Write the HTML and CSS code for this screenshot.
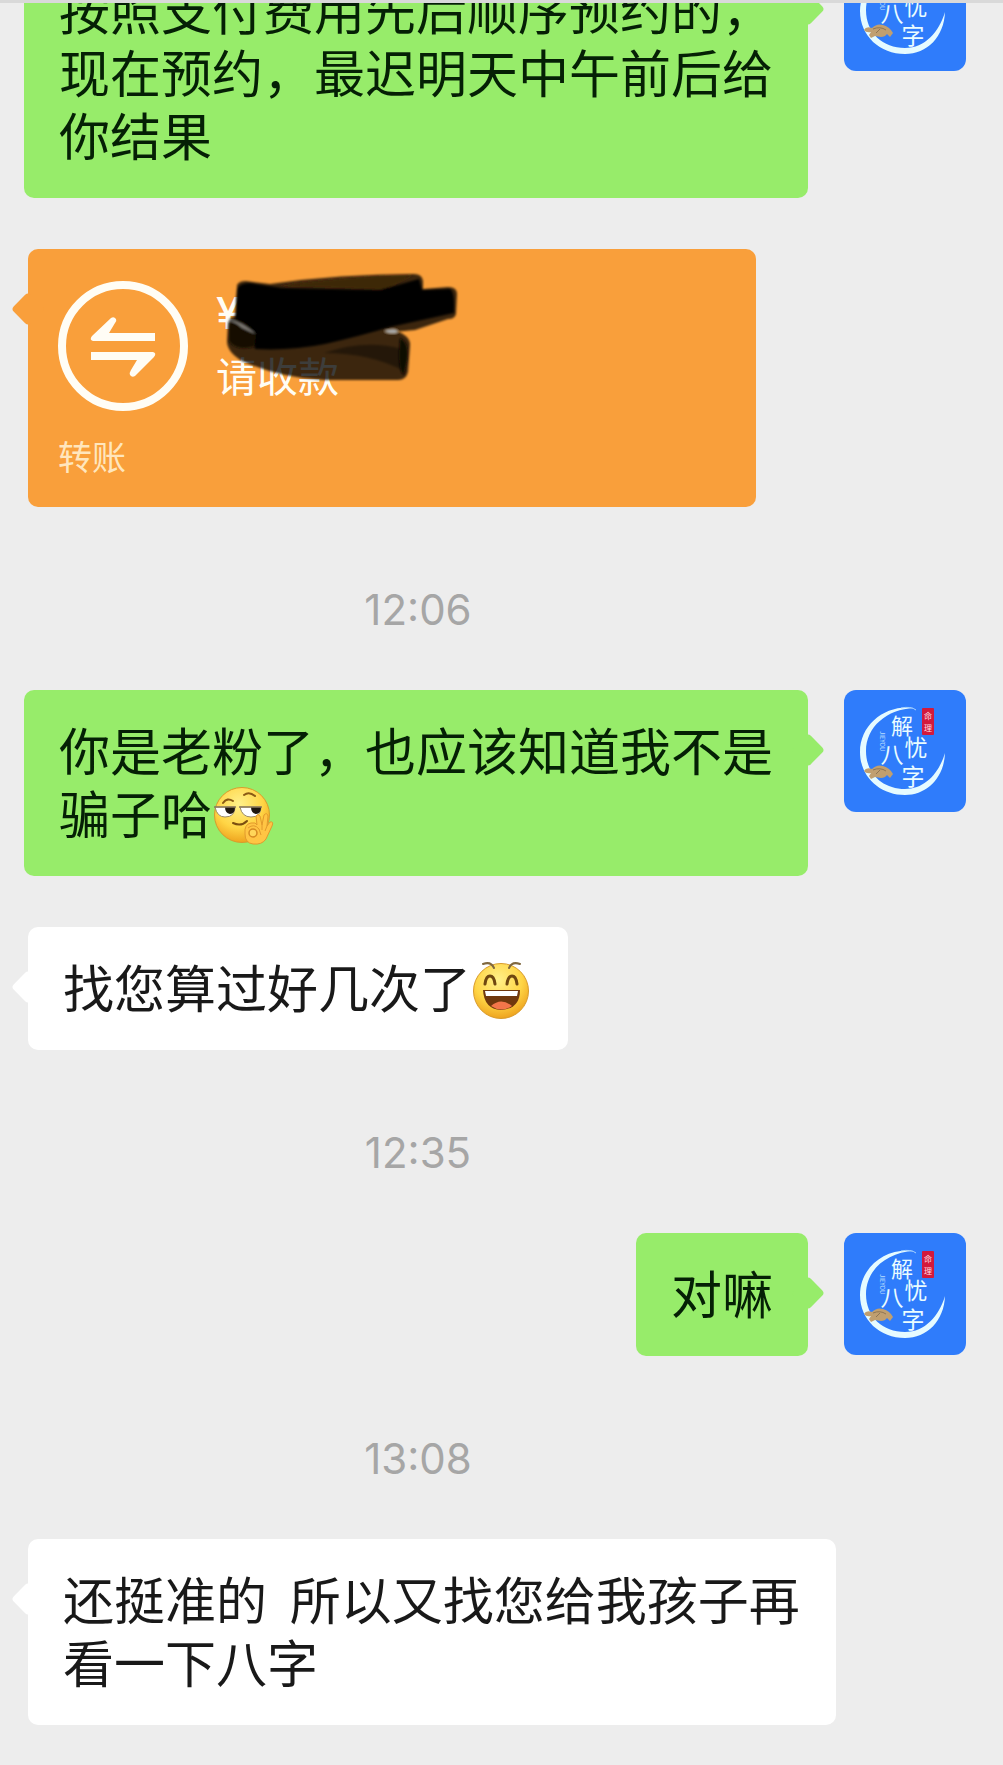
FILE: index.html
```html
<!DOCTYPE html>
<html lang="zh-CN">
<head>
    <meta charset="UTF-8">
    <meta name="viewport" content="width=device-width, initial-scale=1.0">
    <title>聊天</title>
    <link rel="stylesheet" href="styles.css">
</head>
<body>
    <!-- Shared avatar drawing -->
    <svg class="defs" width="0" height="0" aria-hidden="true">
        <symbol id="avatar" viewBox="0 0 122 122">
            <rect width="122" height="122" fill="#2f7cfb"/>
            <path d="M70 18C42 14 16 34 16 62C16 87 36 105 61 105C83 105 100 88 101 63C95 83 81 99 61 99C39 99 22 84 22 61C22 37 43 19 70 18Z" fill="#e6fbff"/>
            <path d="M57 18Q67 16 72 20" fill="none" stroke="#a9d4ff" stroke-width="1"/>
            <g fill="#eafcff" font-family="'Noto Sans CJK SC', sans-serif" text-anchor="middle">
                <text x="58" y="44" font-size="22">解</text>
                <text x="72" y="66" font-size="23">忧</text>
                <text x="48" y="73" font-size="23">八</text>
                <text x="69" y="95" font-size="23">字</text>
                <text transform="translate(36 41) rotate(90)" font-size="6" fill="#b9dcff" text-anchor="start">JIEYOU</text>
            </g>
            <rect x="78" y="18" width="12" height="27" rx="1" fill="#d3193c"/>
            <g fill="#ffdfe2" font-family="'Noto Sans CJK SC', sans-serif" font-size="8" text-anchor="middle">
                <text x="84" y="29">命</text>
                <text x="84" y="41">理</text>
            </g>
            <path d="M20 81Q22 77 28 79Q33 74 39 76Q46 78 49 84L46 88L43 85Q41 88 37 88L31 87L27 89L25 86L27 83Q22 84 20 81Z" fill="#c09f70"/>
            <path d="M29 80Q36 77 42 81M32 84L36 80" fill="none" stroke="#8f7553" stroke-width="1"/>
        </symbol>
    </svg>

    <main class="chat">
        <div class="messages">
            <div class="row sent">
                <div class="bubble">按照支付费用先后顺序预约的，现在预约，最迟明天中午前后给你结果</div>
                <svg class="avatar" role="img" aria-label="解忧八字"><use href="#avatar"/></svg>
            </div>

            <div class="row received">
                <div class="transfer">
                    <div class="transfer-main">
                        <svg class="transfer-icon" viewBox="0 0 130 130" aria-hidden="true">
                            <circle cx="65" cy="65" r="61" fill="none" stroke="#fffdf5" stroke-width="8"/>
                            <path d="M97 52V60H35Q31 59 34 55L53 37Q56 35 58 38Q59 40 57 42L51 52ZM33 71H95Q99 72 96 76L77 95Q74 97 72 94Q71 92 73 89L79 79H33Z" fill="#fffdf5"/>
                        </svg>
                        <div class="transfer-info">
                            <div class="amount">¥</div>
                            <div class="status">请收款</div>
                        </div>
                    </div>
                    <div class="transfer-type">转账</div>
                    <!-- Marker strokes hiding the amount -->
                    <svg class="marker" viewBox="0 0 240 116" aria-hidden="true">
                        <defs>
                            <filter id="soft"><feGaussianBlur stdDeviation="1"/></filter>
                        </defs>
                        <g filter="url(#soft)">
                            <path d="M17 14Q19 10 26 10L50 13Q120 3 194 3Q202 3 203 10L203 18L228 16Q237 16 237 23L236 43Q235 48 228 48L195 59Q176 61 176 60Q191 65 190 75L188 101Q186 109 178 109L104 109Q60 107 22 90Q7 81 7 70L8 52Q9 46 16 45Z" fill="#050300" fill-opacity="0.76"/>
                            <path d="M58 15Q130 5 193 4L165 19Q120 16 58 15Z" fill="#402508" fill-opacity="0.5"/>
                            <path d="M104 82Q145 68 182 78L184 100Q150 82 104 82Z" fill="#000" fill-opacity="0.4"/>
                            <path d="M17 18Q20 12 30 12L62 17L160 19L199 8L202 19L230 18Q235 20 234 42L170 56Q140 65 105 73Q70 80 35 78L33 64Q27 53 15 47Z" fill="#000"/>
                            <path d="M9 60Q8 48 16 48Q30 51 36 65L34 76Q15 80 9 70Z" fill="#161006"/>
                            <path d="M8 50Q17 47 36 63Q30 61 22 57Q16 51 8 50Z" fill="#ddd" fill-opacity="0.5"/>
                            <path d="M164 60Q176 56 178 61Q172 64 164 60Z" fill="#d8e4ee" fill-opacity="0.7"/>
                            <path d="M180 67Q190 72 187 90L184 104Q177 101 180 67Z" fill="#0d0903"/>
                        </g>
                    </svg>
                </div>
            </div>

            <time class="time">12:06</time>

            <div class="row sent">
                <div class="bubble">你是老粉了，也应该知道我不是骗子哈<svg class="emoji" viewBox="0 0 62 60" role="img" aria-label="得意">
                    <defs>
                        <radialGradient id="face" cx="0.45" cy="0.3" r="0.72">
                            <stop offset="0" stop-color="#fff08a"/>
                            <stop offset="0.6" stop-color="#ffd545"/>
                            <stop offset="1" stop-color="#eda01c"/>
                        </radialGradient>
                    </defs>
                    <circle cx="30" cy="29" r="27.500" fill="url(#face)" stroke="#d89b2c"/>
                    <path d="M11 17Q15 11 21 15M32 9Q37 5 43 10" fill="none" stroke="#8a5a14" stroke-width="2" stroke-linecap="round"/>
                    <path d="M3 21H23Q23 31 13 31Q5 31 3 21ZM28 21H49Q49 31 39 31Q30 31 28 21Z" fill="#fff" stroke="#9b8a67"/>
                    <path d="M13 21H23Q23 28 18 28Q13 27 13 21ZM39 21H49Q49 28 44 28Q39 27 39 21Z" fill="#1f1710"/>
                    <path d="M2 21H24M27 21H50" stroke="#8d7c5c" stroke-width="1.500"/>
                    <path d="M21 37Q29 41 35 35" fill="none" stroke="#7c4f10" stroke-width="2" stroke-linecap="round"/>
                    <path d="M33 48Q32 38 39 37Q44 36 45 39L44 30Q46 27 48 30L50 39L52 29Q55 26 56 30L55 40L58 36Q62 35 60 40L54 53Q50 59 41 58Q33 57 33 48Z" fill="#ffc544" stroke="#e29a2c"/>
                    <circle cx="41" cy="47" r="4" fill="#ffd65a" stroke="#d58a22" stroke-width="1.500"/>
                    <path d="M36 42Q42 37 47 43L49 49M50 39V44M55 40L53 45" fill="none" stroke="#e29a2c"/>
                </svg></div>
                <svg class="avatar" role="img" aria-label="解忧八字"><use href="#avatar"/></svg>
            </div>

            <div class="row received">
                <div class="bubble">找您算过好几次了<svg class="emoji" viewBox="0 0 62 60" role="img" aria-label="大笑">
                    <circle cx="30" cy="31" r="27.500" fill="url(#face)" stroke="#d89b2c"/>
                    <path d="M12 4Q20 1 23 8M49 4Q41 1 38 8" fill="none" stroke="#80683f" stroke-width="2" stroke-linecap="round"/>
                    <path d="M14 24Q15 16 19 16Q23 16 24 24M36 24Q37 16 41 16Q45 16 46 24" fill="none" stroke="#6f4710" stroke-width="3" stroke-linecap="round"/>
                    <path d="M12 30H49Q49 49 30 50Q13 49 12 30Z" fill="#70380d"/>
                    <path d="M14 31H47L46 36H15Z" fill="#fff"/>
                    <path d="M20 46Q30 37 41 46Q30 53 20 46Z" fill="#f4764a"/>
                </svg></div>
            </div>

            <time class="time">12:35</time>

            <div class="row sent">
                <div class="bubble">对嘛</div>
                <svg class="avatar" role="img" aria-label="解忧八字"><use href="#avatar"/></svg>
            </div>

            <time class="time">13:08</time>

            <div class="row received">
                <div class="bubble">还挺准的  所以又找您给我孩子再看一下八字</div>
            </div>
        </div>
    </main>
</body>
</html>
```

FILE: styles.css
```css
* {
    box-sizing: border-box;
}
body {
    margin: 0;
    background: #ededed;
    font-family: "Noto Sans CJK SC", sans-serif;
}
.defs {
    position: absolute;
}
.chat {
    border-top: 3px solid #d9d9d9;
    overflow: hidden;
}
/* scrolled so the first message runs under the top edge */
.messages {
    display: flex;
    flex-direction: column;
    gap: 51px;
    margin-top: -54px;
    padding: 0 37px 40px 24px;
}
.row {
    display: flex;
    align-items: flex-start;
}
.sent {
    justify-content: flex-end;
    gap: 36px;
}
.received {
    padding-left: 4px;
}
.bubble {
    position: relative;
    max-width: 808px;
    padding: 28px 35px 32px;
    border-radius: 10px;
    background: #fff;
    color: #191919;
    font-size: 51px;
    line-height: 63px;
    white-space: pre-wrap;
}
.sent .bubble {
    background: #97ec6a;
    color: #052005;
}
.bubble::before,
.transfer::before {
    content: "";
    position: absolute;
    top: 48px;
    left: -12px;
    width: 24px;
    height: 24px;
    border-radius: 4px;
    background: inherit;
    transform: rotate(45deg);
}
.sent .bubble::before {
    left: auto;
    right: -12px;
}
.avatar {
    flex: none;
    width: 122px;
    height: 122px;
    border-radius: 12px;
}
.emoji {
    width: 62px;
    height: 60px;
    vertical-align: -2px;
    margin: -10px 0;
}
.time {
    padding: 23px 106px 1px 0;
    margin-right: 48px;
    color: #a6a6a6;
    font-family: Inter, sans-serif;
    font-size: 42px;
    line-height: 57px;
    text-align: center;
}
.transfer {
    position: relative;
    width: 728px;
    height: 258px;
    padding: 32px 30px;
    border-radius: 10px;
    background: #f99f3b;
    color: #fffdf5;
}
.transfer-main {
    display: flex;
    gap: 28px;
}
.transfer-icon {
    width: 130px;
    height: 130px;
}
.amount {
    font-family: Inter, sans-serif;
    font-size: 44px;
    font-weight: 500;
    line-height: 64px;
}
.status {
    font-size: 41px;
    line-height: 58px;
}
.transfer-type {
    margin-top: 23px;
    color: #ffe6bd;
    font-size: 34px;
    line-height: 44px;
}
.marker {
    position: absolute;
    top: 22px;
    left: 192px;
    width: 240px;
    height: 116px;
}
```
